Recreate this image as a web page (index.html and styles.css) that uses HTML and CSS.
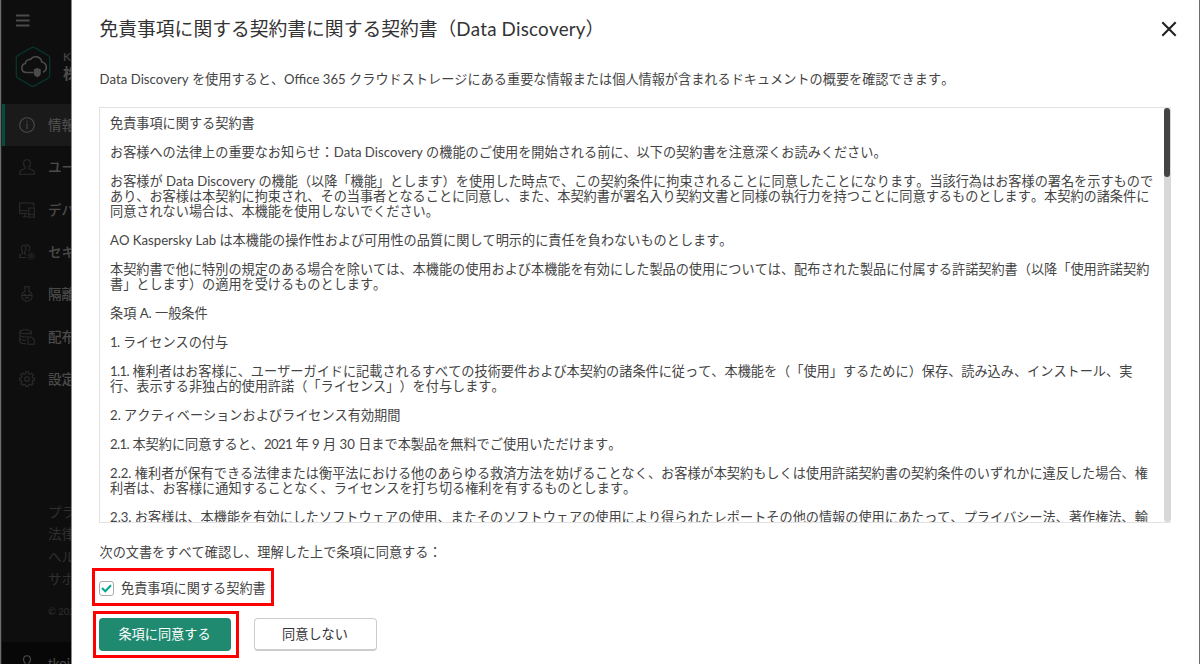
FILE: index.html
```
<!DOCTYPE html>
<html lang="ja">
<head>
    <meta charset="UTF-8">
    <meta name="viewport" content="width=device-width, initial-scale=1.0">
    <title>Data Discovery</title>
    <link rel="stylesheet" href="styles.css">
</head>
<body>
    <div class="page">
        <aside class="sidebar">
            <div class="menu-toggle">
                <svg width="14" height="13" viewBox="0 0 14 13" stroke="#4b4b4b" stroke-width="2"><path d="M0 1.5h13.5M0 6.5h13.5M0 11.5h13.5"/></svg>
            </div>
            <div class="brand">
                <svg class="brand-logo" width="36" height="42" viewBox="0 0 36 42" fill="none">
                    <path d="M16 1.800a4 4 0 0 1 4 0l13 7.500a3 3 0 0 1 1.700 2.800v17.300a3 3 0 0 1-1.700 2.800l-13 7.500a4 4 0 0 1-4 0l-13-7.500a3 3 0 0 1-1.700-2.800V12.100a3 3 0 0 1 1.700-2.800z" stroke="#07332b" stroke-width="1.400"/>
                    <path d="M18.500 26.500H11a4.600 4.600 0 0 1-.8-9 5 5 0 0 1 5.300-4 6.200 6.200 0 0 1 11.300 2.500 5.400 5.400 0 0 1 1.200 10.300" stroke="#4b4b4b" stroke-width="1.600"/>
                    <path d="M22.300 22l3.500 1.200v4c0 2-1.500 3-3.500 4-2-1-3.500-2-3.500-4v-4z" fill="#4b4b4b"/>
                </svg>
                <div class="brand-text">
                    <span>Ka</span>
                    <strong>株</strong>
                </div>
            </div>
            <nav class="nav">
                <a class="nav-item active">
                    <svg viewBox="0 0 16 16"><circle cx="8" cy="8" r="7.300"/><path d="M8 6.500v5.500M8 3.800v1.400"/></svg>
                    <span>情報</span>
                </a>
                <a class="nav-item">
                    <svg viewBox="0 0 16 16"><path d="M8 .8c4.500 0 4 5.500 1.800 7.400v1.500l4 1.500c1 .4 1.500 1.300 1.500 2.300v1.700H.7v-1.700c0-1 .5-1.900 1.500-2.300l4-1.500V8.200C4 6.300 3.500.8 8 .8z"/></svg>
                    <span>ユー</span>
                </a>
                <a class="nav-item">
                    <svg viewBox="0 0 16 16"><path d="M8.500 11.500H.7V1h14v3.500M.7 8.800h8M3.500 14.800h5M6 11.500v3.300M9.800 6h5.500v9.300H9.800zM9.800 12.500h5.500"/></svg>
                    <span>デバ</span>
                </a>
                <a class="nav-item">
                    <svg viewBox="0 0 16 16"><path d="M7 10.500l-1.500-.8V8.300C7.500 6 7.200 1 4.800 1S2 6 3.500 8v1.500L.8 11v2.500H7M7 1c4-.8 5 4 2.500 6.500"/><circle cx="12" cy="12" r="1.200"/><circle cx="12" cy="12" r="3" stroke-dasharray="1.400 .8"/></svg>
                    <span>セキ</span>
                </a>
                <a class="nav-item">
                    <svg viewBox="0 0 16 16"><path d="M5 .8h6M6 .8v4.500a5.200 5.200 0 1 0 4 0V.8M3 9.500h10M5 8l2 2M11 8l-2 2M6 12.500l2-1.500 2 1.500"/></svg>
                    <span>隔離</span>
                </a>
                <a class="nav-item">
                    <svg viewBox="0 0 16 16"><ellipse cx="6.500" cy="2.800" rx="5.700" ry="2"/><path d="M.8 2.800v10c0 1 2.500 2 6 2M12.200 2.800v3M.8 6c1 2 5 2.400 7.500 1.800M.8 9.500c1 1.800 4 2 6 1.800M9 8h3.500l2.800 2.800v4.500H9z"/></svg>
                    <span>配布</span>
                </a>
                <a class="nav-item">
                    <svg viewBox="0 0 16 16"><circle cx="8" cy="8" r="2.300"/><path d="M6.800.8h2.400l.4 2 1.400.6 1.700-1.200 1.600 1.600-1.200 1.700.6 1.400 1.800.4v1.900l-1.800.5-.6 1.400 1.200 1.700-1.600 1.600-1.700-1.200-1.400.6-.4 1.600H6.800l-.4-1.600-1.400-.6-1.700 1.200-1.600-1.600 1.200-1.700-.6-1.400L.5 9.200V7.300l1.800-.4.6-1.400-1.200-1.700 1.600-1.600L5 3.400l1.400-.6z"/></svg>
                    <span>設定</span>
                </a>
            </nav>
            <div class="side-links">
                <a>プラ</a>
                <a>法律</a>
                <a>ヘル</a>
                <a>サポ</a>
                <small>© 202</small>
            </div>
            <div class="side-user">
                <svg viewBox="0 0 16 16"><path d="M8 .8c4.500 0 4 5.500 1.800 7.400v1.500l4 1.500c1 .4 1.500 1.300 1.500 2.300v1.700H.7v-1.700c0-1 .5-1.900 1.500-2.300l4-1.500V8.200C4 6.300 3.500.8 8 .8z"/></svg>
                <span>tkoi</span>
            </div>
        </aside>

        <main class="dialog">
            <header class="dialog-header">
                <h1>免責事項に関する契約書に関する契約書（<span class="latin">Data Discovery</span>）</h1>
                <button class="close" aria-label="閉じる">
                    <svg width="16" height="16" viewBox="0 0 16 16" stroke="#222" stroke-width="2.100"><path d="M1.300 1.300l13.400 13.400M14.700 1.300L1.300 14.700"/></svg>
                </button>
            </header>
            <p class="intro">Data Discovery を使用すると、Office 365 クラウドストレージにある重要な情報または個人情報が含まれるドキュメントの概要を確認できます。</p>

            <div class="agreement">
                <div class="agreement-text">
                    <p>免責事項に関する契約書</p>
                    <p>お客様への法律上の重要なお知らせ：Data Discovery の機能のご使用を開始される前に、以下の契約書を注意深くお読みください。</p>
                    <p>お客様が Data Discovery の機能（以降「機能」とします）を使用した時点で、この契約条件に拘束されることに同意したことになります。当該行為はお客様の署名を示すもので<br>あり、お客様は本契約に拘束され、その当事者となることに同意し、また、本契約書が署名入り契約文書と同様の執行力を持つことに同意するものとします。本契約の諸条件に<br>同意されない場合は、本機能を使用しないでください。</p>
                    <p>AO Kaspersky Lab は本機能の操作性および可用性の品質に関して明示的に責任を負わないものとします。</p>
                    <p>本契約書で他に特別の規定のある場合を除いては、本機能の使用および本機能を有効にした製品の使用については、配布された製品に付属する許諾契約書（以降「使用許諾契約<br>書」とします）の適用を受けるものとします。</p>
                    <p>条項 A. 一般条件</p>
                    <p><span class="num">1.</span> ライセンスの付与</p>
                    <p><span class="num">1.1.</span> 権利者はお客様に、ユーザーガイドに記載されるすべての技術要件および本契約の諸条件に従って、本機能を（「使用」するために）保存、読み込み、インストール、実<br>行、表示する非独占的使用許諾（「ライセンス」）を付与します。</p>
                    <p>2. アクティベーションおよびライセンス有効期間</p>
                    <p><span class="num">2.1.</span> 本契約に同意すると、<span class="num">2021</span> 年 9 月 30 日まで本製品を無料でご使用いただけます。</p>
                    <p>2.2. 権利者が保有できる法律または衡平法における他のあらゆる救済方法を妨げることなく、お客様が本契約もしくは使用許諾契約書の契約条件のいずれかに違反した場合、権<br>利者は、お客様に通知することなく、ライセンスを打ち切る権利を有するものとします。</p>
                    <p>2.3. お客様は、本機能を有効にしたソフトウェアの使用、またそのソフトウェアの使用により得られたレポートその他の情報の使用にあたって、プライバシー法、著作権法、輸</p>
                </div>
                <div class="scrollbar"><div class="thumb"></div></div>
            </div>

            <p class="confirm">次の文書をすべて確認し、理解した上で条項に同意する：</p>
            <div class="highlight highlight-check">
                <label class="check">
                    <span class="checkbox">
                        <svg width="11" height="9" viewBox="0 0 11 9" fill="none" stroke="#00a88e" stroke-width="2"><path d="M1 4l3.300 3.300L10 1.300"/></svg>
                    </span>
                    免責事項に関する契約書
                </label>
            </div>
            <div class="actions">
                <div class="highlight highlight-button">
                    <button class="btn btn-primary">条項に同意する</button>
                </div>
                <button class="btn btn-secondary">同意しない</button>
            </div>
        </main>
    </div>
</body>
</html>
```

FILE: styles.css
```
* {
    box-sizing: border-box;
}

body {
    margin: 0;
    background: #6b6b6b;
    color: #444;
    font-family: Lato, "Noto Sans CJK JP", sans-serif;
    font-size: 13.160px;
    text-spacing-trim: space-all;
    font-kerning: none;
    overflow: hidden;
}

p, h1 {
    margin: 0;
    font-weight: 400;
}

button {
    font-family: inherit;
    padding: 0;
}

.page {
    display: flex;
    height: 664px;
    padding: 0 1px;
}

/* sidebar, dimmed behind the dialog */
.sidebar {
    width: 70px;
    flex: none;
    display: flex;
    flex-direction: column;
    overflow: hidden;
    white-space: nowrap;
    background: #0e0e0e;
    color: #4b4b4b;
    border-left: 1px solid #222;
}

.menu-toggle {
    height: 46px;
    padding: 14px 0 0 14px;
}

.menu-toggle svg {
    display: block;
}

.brand {
    display: flex;
    height: 58px;
    padding-left: 13px;
    gap: 12px;
}

.brand-logo {
    flex: none;
}

.brand-text {
    display: flex;
    flex-direction: column;
    font-size: 12px;
    line-height: 14px;
    padding-top: 4px;
}

.brand-text strong {
    font-size: 15px;
    line-height: 19px;
}

.nav-item {
    display: flex;
    align-items: center;
    gap: 13px;
    height: 42.300px;
    padding-left: 17px;
    font-size: 13.500px;
    font-weight: 500;
}

.nav-item span {
    margin-top: -2px;
}

.nav-item svg, .side-user svg {
    width: 16px;
    height: 16px;
    flex: none;
    fill: none;
    stroke: #2b2b2b;
    stroke-width: 1.100;
}

.nav-item.active {
    background: #1a1a1a;
    border-left: 3px solid #064b3d;
    padding-left: 14px;
}

.nav-item.active svg {
    stroke: #4b4b4b;
}

.side-links {
    display: flex;
    flex-direction: column;
    margin-top: auto;
    height: 141px;
    padding-left: 46px;
    font-size: 13.500px;
    line-height: 22.300px;
    color: #303030;
}

.side-links small {
    font-size: 9.500px;
    margin-top: 11px;
}

.side-user {
    display: flex;
    gap: 13px;
    height: 22px;
    padding: 13px 0 0 17px;
    background: #070707;
    font-size: 13px;
}

.side-user svg {
    stroke: #4b4b4b;
}

/* dialog */
.dialog {
    flex: 1;
    min-width: 0;
    background: #fff;
    border-left: 1px solid #8a8a8a;
    padding-left: 27.500px;
    white-space: nowrap;
}

.dialog-header {
    display: flex;
    justify-content: space-between;
    align-items: center;
    height: 57px;
    padding-right: 22px;
}

.dialog-header h1 {
    font-size: 18.800px;
    line-height: 28px;
    color: #333;
}

.latin {
    letter-spacing: 0.150px;
}

.close {
    display: flex;
    border: 0;
    background: none;
}

.intro {
    height: 50px;
    line-height: 45px;
}

.agreement {
    display: flex;
    justify-content: space-between;
    width: 1072px;
    height: 416px;
    margin-left: -0.500px;
    border: 1px solid #e2e2e2;
    border-right: 0;
    overflow: hidden;
}

.agreement-text {
    padding: 8px 0 0 10px;
    line-height: 15.400px;
}

.agreement-text p {
    margin-bottom: 13.420px;
}

.num {
    letter-spacing: -0.600px;
}

.scrollbar {
    width: 7px;
    flex: none;
    background: #d8d8d8;
    border-radius: 3px;
}

.thumb {
    width: 6px;
    height: 69px;
    background: #444;
    border-radius: 3px;
}

.confirm {
    height: 45px;
    line-height: 58px;
}

/* red frames around the controls to click */
.highlight {
    display: flex;
    align-items: center;
    border: 3px solid #f00;
    margin-left: -7.500px;
}

.highlight-check {
    width: 182px;
    height: 38px;
    padding-left: 4px;
}

.check {
    display: flex;
    align-items: center;
    gap: 7px;
}

.checkbox {
    display: flex;
    align-items: center;
    justify-content: center;
    width: 15px;
    height: 15px;
    margin-top: 2px;
    border: 1px solid #aaa;
    border-radius: 3px;
}

.actions {
    display: flex;
    align-items: center;
    gap: 15px;
    margin-top: 5px;
}

.highlight-button {
    width: 146px;
    height: 47px;
    margin-left: -7px;
    padding-left: 3px;
}

.btn {
    font-size: 13.160px;
    height: 33px;
    border-radius: 4px;
    padding-bottom: 2px;
}

.btn-primary {
    width: 132px;
    border: 0;
    background: #1f8a70;
    color: #fff;
}

.btn-secondary {
    width: 123px;
    background: #fff;
    color: #333;
    border: 1px solid #ccc;
    border-bottom-width: 2px;
}
```
